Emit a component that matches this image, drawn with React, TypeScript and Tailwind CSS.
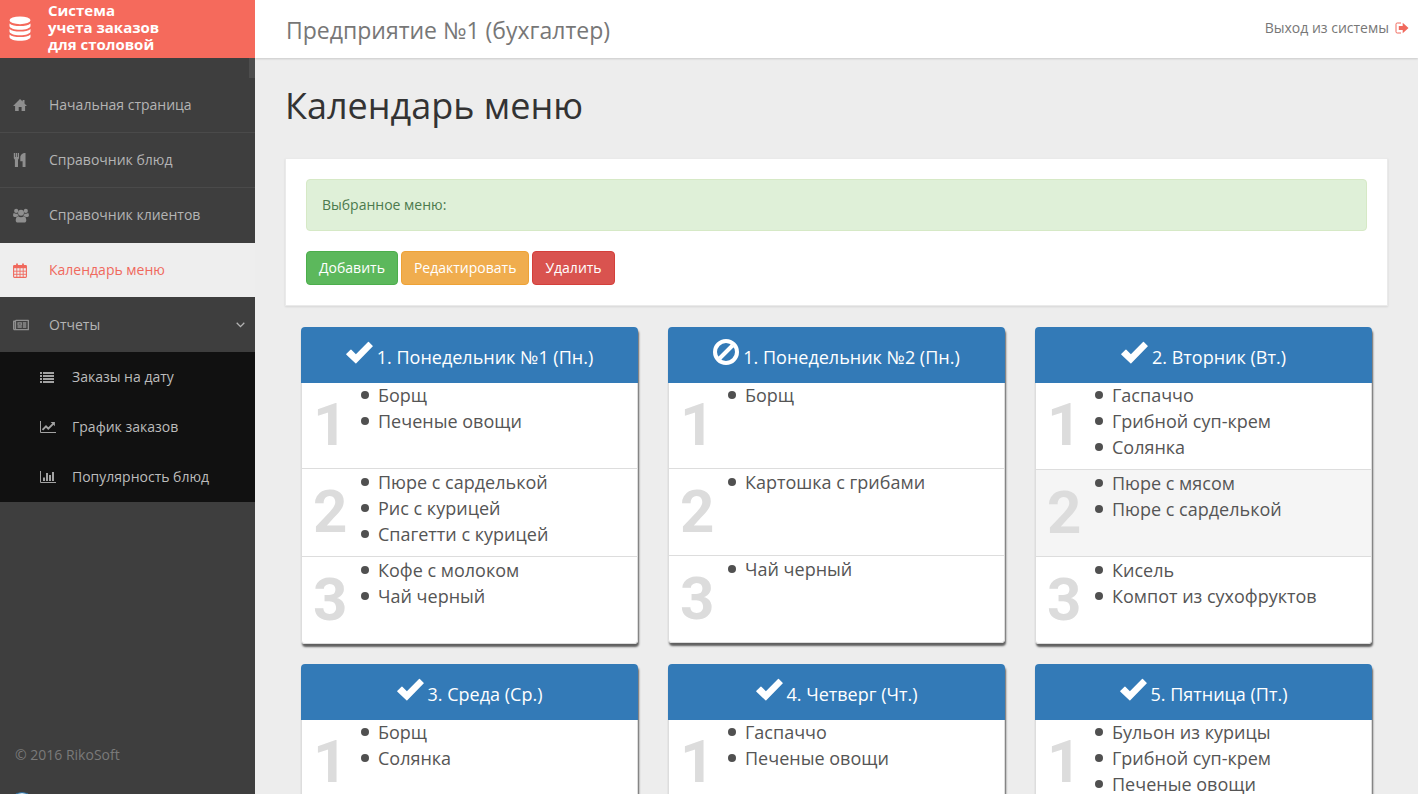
import { clsx } from "clsx";
import type { ReactNode } from "react";
import { FaRegNewspaper } from "react-icons/fa";

type Day = {
  title: string;
  enabled: boolean;
  courses: string[][];
  hovered?: number;
};

const days: Day[] = [
  {
    title: "1. Понедельник №1 (Пн.)",
    enabled: true,
    courses: [
      ["Борщ", "Печеные овощи"],
      ["Пюре с сарделькой", "Рис с курицей", "Спагетти с курицей"],
      ["Кофе с молоком", "Чай черный"],
    ],
  },
  {
    title: "1. Понедельник №2 (Пн.)",
    enabled: false,
    courses: [["Борщ"], ["Картошка с грибами"], ["Чай черный"]],
  },
  {
    title: "2. Вторник (Вт.)",
    enabled: true,
    hovered: 1,
    courses: [
      ["Гаспаччо", "Грибной суп-крем", "Солянка"],
      ["Пюре с мясом", "Пюре с сарделькой"],
      ["Кисель", "Компот из сухофруктов"],
    ],
  },
  {
    title: "3. Среда (Ср.)",
    enabled: true,
    courses: [["Борщ", "Солянка"]],
  },
  {
    title: "4. Четверг (Чт.)",
    enabled: true,
    courses: [["Гаспаччо", "Печеные овощи"]],
  },
  {
    title: "5. Пятница (Пт.)",
    enabled: true,
    courses: [["Бульон из курицы", "Грибной суп-крем", "Печеные овощи"]],
  },
];

function DatabaseIcon() {
  return (
    <svg viewBox="0 0 22 26" className="h-[26px] w-[22px]" fill="currentColor" aria-hidden="true">
      <ellipse cx="11" cy="4.3" rx="10.5" ry="3.900" />
      <path d="M.5 7.4c2 1.900 6 2.700 10.500 2.700s8.500-.8 10.500-2.700v2.600c0 2.100-4.700 3.800-10.500 3.800S.5 12.100.5 10z" />
      <path d="M.5 12.900c2 1.900 6 2.700 10.500 2.700s8.500-.8 10.500-2.700v2.600c0 2.100-4.700 3.800-10.500 3.800S.5 17.600.5 15.500z" />
      <path d="M.5 18.400c2 1.900 6 2.700 10.500 2.700s8.500-.8 10.500-2.700V21c0 2.100-4.700 3.800-10.500 3.800S.5 23.100.5 21z" />
    </svg>
  );
}

function HomeIcon() {
  return (
    <svg viewBox="0 0 14 12" className="h-3 w-3.5" fill="currentColor" aria-hidden="true">
      <path d="M7 0l2.600 2.600V.9h1.900v3.600L14 7h-1.900v5H8.600V8H5.700v4H2.100V7H0z" />
    </svg>
  );
}

function UsersIcon() {
  return (
    <svg viewBox="0 0 16 15" className="h-[15px] w-4" fill="currentColor" aria-hidden="true">
      <circle cx="3.200" cy="2.900" r="2.100" />
      <circle cx="12.800" cy="2.900" r="2.100" />
      <circle cx="8" cy="4.700" r="3" />
      <path d="M1 5c.8.700 2.300.9 3.500.4.100 1 .5 1.800 1.200 2.500-1 0-1.800.4-2.400 1.100H1.500C.6 9 .1 8.500.1 7.600.1 6.300.3 5.300 1 5z" />
      <path d="M15 5c-.8.700-2.300.9-3.500.4-.1 1-.5 1.800-1.200 2.500 1 0 1.800.4 2.400 1.100h1.800c.9 0 1.400-.5 1.400-1.400 0-1.300-.2-2.300-.9-2.600z" />
      <path d="M5.200 8.300c1.600 1.200 4 1.200 5.600 0 1.700.1 2.500 2 2.500 4.200 0 1.300-.8 2.100-2.100 2.100H4.800c-1.300 0-2.100-.8-2.100-2.100 0-2.200.8-4.100 2.500-4.200z" />
    </svg>
  );
}

function CutleryIcon() {
  return (
    <svg viewBox="0 0 14 14" className="size-3.5" fill="currentColor" aria-hidden="true">
      <path d="M.8 0h1.200v4h.7V0h1.400v4h.7V0H6v5.200L5 6.800V14H1.900V6.800L.8 5.200z" />
      <path d="M12.500 0v14H9.600V8.200H7.300V4.500C7.300 2 9.300 0 12.500 0z" />
    </svg>
  );
}

function CalendarIcon() {
  return (
    <svg viewBox="0 0 14 15" className="h-[15px] w-3.5" fill="none" stroke="currentColor" aria-hidden="true">
      <rect x=".6" y="2.600" width="12.800" height="11.800" rx=".8" strokeWidth="1.100" />
      <path d="M.6 3.900h12.800" strokeWidth="2.600" />
      <path d="M.6 8.200h12.800M.6 11.300h12.800M3.800 5v9.400M7 5v9.400M10.200 5v9.400" strokeWidth=".9" />
      <path d="M4 .4v3M10 .4v3" strokeWidth="1.800" />
    </svg>
  );
}

function ListIcon() {
  return (
    <svg viewBox="0 0 14 11" className="h-[11px] w-3.5" fill="currentColor" aria-hidden="true">
      <path d="M0 0h2v2H0zM0 3h2v2H0zM0 6h2v2H0zM0 9h2v2H0zM3 0h11v2H3zM3 3h11v2H3zM3 6h11v2H3zM3 9h11v2H3z" />
    </svg>
  );
}

function LineChartIcon() {
  return (
    <svg viewBox="0 0 16 12" className="h-3 w-4" fill="none" stroke="currentColor" aria-hidden="true">
      <path d="M.5 0v11.500H16" />
      <path d="M2.500 8.800 6 5.300l2.300 2.300 4.800-4.800" strokeWidth="1.900" />
      <path d="M10.600.9h4.300v4.300z" fill="currentColor" stroke="none" />
    </svg>
  );
}

function BarChartIcon() {
  return (
    <svg viewBox="0 0 16 12" className="h-3 w-4" fill="none" stroke="currentColor" aria-hidden="true">
      <path d="M.5 0v11.500H16" />
      <path d="M4 10V6.500M7 10V2M10 10V4M13 10V1" strokeWidth="2" />
    </svg>
  );
}

function LogoutIcon() {
  return (
    <svg viewBox="0 0 14 12" className="h-3 w-3.5" aria-hidden="true">
      <path d="M6 1H2.200Q1 1 1 2.200v7.600Q1 11 2.200 11H6" fill="none" stroke="currentColor" strokeWidth="1" />
      <path d="M3.800 4h3.900V.8L13.500 6l-5.800 5.200V8H3.800z" fill="currentColor" />
    </svg>
  );
}

function CheckIcon() {
  return (
    <svg viewBox="0 0 27 23" className="h-[23px] w-[27px]" fill="currentColor" aria-hidden="true">
      <path d="M.4 12.800 4.500 8.700a.6.6 0 0 1 .9 0l4.500 4.500L22 .9a.6.6 0 0 1 .9 0l3.700 3.800a.6.6 0 0 1 0 .9L10.300 22.200a.6.6 0 0 1-.9 0L.4 13.700a.6.6 0 0 1 0-.9z" />
    </svg>
  );
}

function BanIcon() {
  return (
    <svg viewBox="0 0 26 26" className="size-[26px]" fill="none" stroke="currentColor" aria-hidden="true">
      <circle cx="13" cy="13" r="11" strokeWidth="4" />
      <path d="M6.500 19.500 19.500 6.500" strokeWidth="4" />
    </svg>
  );
}

function ChevronIcon() {
  return (
    <svg viewBox="0 0 9 6" className="ml-auto h-1.5 w-[9px]" fill="none" stroke="currentColor" aria-hidden="true">
      <path d="M.7.8 4.500 4.600 8.300.8" strokeWidth="1.300" />
    </svg>
  );
}

function NavItem({ icon, label, active, children }: {
  icon: ReactNode;
  label: string;
  active?: boolean;
  children?: ReactNode;
}) {
  return (
    <a
      href="#"
      className={clsx(
        "flex h-[54px] items-center pr-2.5",
        active ? "bg-[#eeeeee] text-[#f0695d]" : "text-[#b4b4b4]"
      )}
    >
      <span className={clsx("flex w-[49px] pl-[13px]", !active && "text-[#8f8f8f]")}>{icon}</span>
      {label}
      {children}
    </a>
  );
}

function SubItem({ icon, label }: { icon: ReactNode; label: string }) {
  return (
    <a href="#" className="flex h-[50px] items-center text-[#bcbcbc]">
      <span className="flex w-[72px] pl-10 text-[#a3a3a3]">{icon}</span>
      {label}
    </a>
  );
}

function Sidebar() {
  return (
    <aside className="relative flex w-[255px] shrink-0 flex-col overflow-hidden bg-[#3e3e3e] text-sm">
      <a href="#" className="flex h-[58px] shrink-0 items-center bg-[#f56a5c] pl-[9px] text-white">
        <span className="w-[39px]">
          <DatabaseIcon />
        </span>
        <span className="pb-1 text-[15px] leading-[17px] font-bold">
          Система
          <br />
          учета заказов
          <br />
          для столовой
        </span>
      </a>
      <div className="ml-auto h-5 w-1.5 shrink-0 bg-[#4d4d4d]" />
      <nav>
        <div className="flex flex-col gap-px">
          <NavItem icon={<HomeIcon />} label="Начальная страница" />
          <hr className="-my-px border-[#4a4a4a]" />
          <NavItem icon={<CutleryIcon />} label="Справочник блюд" />
          <hr className="-my-px border-[#4a4a4a]" />
          <NavItem icon={<UsersIcon />} label="Справочник клиентов" />
          <NavItem icon={<CalendarIcon />} label="Календарь меню" active />
          <NavItem icon={<FaRegNewspaper className="size-4" />} label="Отчеты">
            <ChevronIcon />
          </NavItem>
        </div>
        <div className="bg-[#111111]">
          <SubItem icon={<ListIcon />} label="Заказы на дату" />
          <SubItem icon={<LineChartIcon />} label="График заказов" />
          <SubItem icon={<BarChartIcon />} label="Популярность блюд" />
        </div>
      </nav>
      <footer className="mt-auto pb-[29px] pl-[15px] text-[#7a7a7a]">© 2016 RikoSoft</footer>
      <span className="absolute -bottom-[26px] left-2 size-7 rounded-full border border-[#2c6c9c] bg-[#cfe6f5]" />
    </aside>
  );
}

function DayCard({ day }: { day: Day }) {
  return (
    <article className="rounded bg-white shadow-[1px_3px_2px_rgba(0,0,0,0.6)]">
      <h2 className="relative -mb-px flex h-14 items-center justify-center gap-1 rounded-t bg-[#337ab7] text-lg text-white">
        <span className="pb-1.5">{day.enabled ? <CheckIcon /> : <BanIcon />}</span>
        <span className="pt-[3px]">{day.title}</span>
      </h2>
      {day.courses.map((dishes, i) => (
        <div
          key={i}
          className={clsx(
            "flex min-h-[87px] border-x border-b border-[#dddddd] last:rounded-b",
            day.hovered === i && "bg-[#f5f5f5]"
          )}
        >
          <span className="w-[59px] shrink-0 pl-[11px] font-[Roboto,Arial,sans-serif] text-[60px] leading-[86px] font-bold text-[#dcdcdc]">
            {i + 1}
          </span>
          <ul className="pb-[9px] text-lg leading-[26px] text-[#555555]">
            {dishes.map((dish) => (
              <li
                key={dish}
                className="flex items-center gap-[9px] before:size-2 before:shrink-0 before:rounded-full before:bg-[#505050]"
              >
                {dish}
              </li>
            ))}
          </ul>
        </div>
      ))}
    </article>
  );
}

export default function App() {
  return (
    <div className="flex h-screen overflow-hidden bg-[#ededed] font-['Open_Sans','Noto_Sans',sans-serif]">
      <Sidebar />
      <div className="min-w-0 flex-1">
        <header className="flex h-[58px] items-center justify-between bg-white pr-[9px] pl-[31px] text-[#777777] shadow-[0_1px_2px_rgba(0,0,0,0.15)]">
          <span className="pt-0.5 text-[23px]">Предприятие №1 (бухгалтер)</span>
          <a href="#" className="flex items-center gap-1.5 pb-0.5 text-sm">
            Выход из системы
            <span className="text-[#f0695d]">
              <LogoutIcon />
            </span>
          </a>
        </header>
        <main className="px-[30px] pt-7">
          <h1 className="text-4xl leading-10 text-[#333333]">Календарь меню</h1>
          <section className="mt-8 border border-[#eaeaea] bg-white p-5 shadow-[0_1px_2px_rgba(0,0,0,0.1)]">
            <div className="rounded border border-[#d6e9c6] bg-[#dff0d8] p-[15px] text-sm text-[#4c7a4d]">
              Выбранное меню:
            </div>
            <div className="mt-5 flex gap-[3px] text-sm text-white">
              <button type="button" className="h-[34px] rounded border border-[#4cae4c] bg-[#5cb85c] px-3">
                Добавить
              </button>
              <button type="button" className="h-[34px] rounded border border-[#eea236] bg-[#f0ad4e] px-3">
                Редактировать
              </button>
              <button type="button" className="h-[34px] rounded border border-[#d43f3a] bg-[#d9534f] px-3">
                Удалить
              </button>
            </div>
          </section>
          <div className="mt-[21px] grid grid-cols-3 items-start gap-x-[30px] gap-y-5 px-4">
            {days.map((day) => (
              <DayCard key={day.title} day={day} />
            ))}
          </div>
        </main>
      </div>
    </div>
  );
}
